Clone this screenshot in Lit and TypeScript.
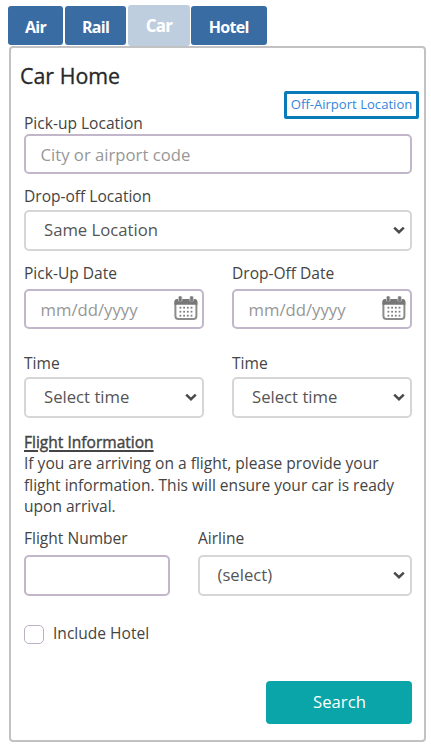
import { LitElement, html, css, svg } from "lit";
import { customElement } from "lit/decorators.js";

const chevron = html`<svg class="chevron" width="12" height="9" viewBox="0 0 12 9">
  <path d="M1.2 1.6 L6 6.2 L10.8 1.6" fill="none" stroke="#4a4a4a" stroke-width="2.5" />
</svg>`;

const dots = [10.8, 14.8, 18.8].flatMap((y) =>
  [5.5, 9.2, 12.9, 16.6].map((x) => svg`<rect x=${x} y=${y} width="1.8" height="1.8" fill="#808080" />`)
);

const calendar = html`<svg class="calendar" width="24" height="25" viewBox="0 0 24 25">
  <rect x="1.4" y="4" width="21" height="19" rx="3" fill="#fff" stroke="#8c8c8c" stroke-width="2" />
  <path d="M.4 8.8 V6 Q.4 3 3.4 3 H20.4 Q23.4 3 23.4 6 V8.8 Z" fill="#777" />
  <rect x="4" y="0" width="4.4" height="5.6" rx="1.5" fill="#ccc" />
  <rect x="15.4" y="0" width="4.4" height="5.6" rx="1.5" fill="#ccc" />
  <rect x="4.9" y=".2" width="2.6" height="5.4" rx="1.2" fill="#777" />
  <rect x="16.3" y=".2" width="2.6" height="5.4" rx="1.2" fill="#777" />
  ${dots}
</svg>`;

@customElement("app-root")
export class AppRoot extends LitElement {
  static styles = css`
    :host {
      display: block;
      box-sizing: border-box;
      height: 750px;
      padding: 5px 5px 8px 8px;
      background: #fff;
      font-family: "Open Sans", sans-serif;
      font-size: 15.55px;
      color: #444;
    }
    *, *::before { box-sizing: border-box; }
    .tabs {
      display: flex;
      align-items: flex-end;
      gap: 2px;
      height: 41px;
      padding-bottom: 1px;
    }
    .tab {
      display: flex;
      align-items: center;
      justify-content: center;
      height: 39px;
      padding-top: 3px;
      border-radius: 3px;
      background: #396ca3;
      color: #fff;
      font-weight: 700;
      font-size: 16px;
      letter-spacing: -0.7px;
    }
    .air { width: 55px; }
    .rail { width: 61px; }
    .car {
      width: 62px;
      height: 41px;
      margin: 0 -1px -1px 0;
      padding: 0;
      background: #bfcede;
      font-size: 17px;
    }
    .hotel { width: 75.5px; }
    .panel {
      width: 417px;
      height: 696px;
      margin-left: 1px;
      padding: 0 12px 0 13px;
      border: 2px solid #c2c2c2;
      border-radius: 4px;
    }
    .title {
      height: 43px;
      margin: 0 0 0 -4px;
      padding-top: 13px;
      font-size: 21.4px;
      font-weight: 400;
      line-height: 30px;
      color: #282828;
      -webkit-text-stroke: 0.3px #282828;
    }
    .link-row { display: flex; justify-content: flex-end; height: 22px; margin-right: -7px; }
    .link {
      width: 135px;
      height: 28px;
      border: 3px solid #0a7ab8;
      border-radius: 2px;
      color: #3485dc;
      font-size: 13.1px;
      line-height: 21px;
      text-align: center;
      white-space: nowrap;
    }
    .label { display: block; height: 21px; line-height: 20px; white-space: nowrap; }
    .field {
      display: flex;
      align-items: center;
      justify-content: space-between;
      height: 40px;
      padding: 0 5px 0 14.5px;
      border: 2px solid #c2b7ca;
      border-radius: 5px;
      color: #979797;
      font-size: 16.7px;
      white-space: nowrap;
    }
    .select {
      height: 41px;
      padding: 0 5px 0 18px;
      border-color: #d6d6d6;
      color: #555;
    }
    .select span { padding-bottom: 2px; }
    .calendar { margin: -1px -1px 0 0; }
    .pickup { margin-bottom: 12px; }
    .dropoff { margin-bottom: 12px; }
    .dropoff .label { height: 24px; }
    .pair { display: grid; grid-template-columns: 180px 180px; column-gap: 28px; }
    .dates { margin-bottom: 24px; }
    .dates .label { height: 26px; }
    .times { margin-bottom: 14px; }
    .times .label { height: 24px; }
    .flight-title { height: 21px; line-height: 21px; }
    .flight-title span {
      text-decoration: underline;
      text-decoration-thickness: 1.5px;
      text-underline-offset: 2px;
      -webkit-text-stroke: 0.4px #444;
    }
    .note { margin: 0 0 10px; line-height: 21.7px; white-space: nowrap; }
    .flight { grid-template-columns: 146px 214px; margin-bottom: 28px; }
    .flight .label { height: 27px; }
    .flight .field { height: 41px; }
    .flight .select { padding-left: 17.5px; }
    .check { display: flex; align-items: center; gap: 9px; height: 20px; margin-bottom: 37px; }
    .check span + span { padding-bottom: 2px; }
    .box { width: 20px; height: 19px; border: 1.5px solid #bcb0c5; border-radius: 5px; }
    .actions { display: flex; justify-content: flex-end; }
    .search {
      width: 146px;
      height: 43px;
      padding: 0 0 3px 1px;
      border: 0;
      border-radius: 4px;
      background: #0aa5a8;
      color: #fff;
      font: 16.7px "Open Sans", sans-serif;
    }
  `;

  private select(label: string, value: string) {
    return html`<div><span class="label">${label}</span>
      <div class="field select"><span>${value}</span>${chevron}</div></div>`;
  }

  private date(label: string) {
    return html`<div><span class="label">${label}</span>
      <div class="field"><span>mm/dd/yyyy</span>${calendar}</div></div>`;
  }

  render() {
    return html`
      <nav class="tabs">
        <div class="tab air">Air</div>
        <div class="tab rail">Rail</div>
        <div class="tab car">Car</div>
        <div class="tab hotel">Hotel</div>
      </nav>
      <main class="panel">
        <h1 class="title">Car Home</h1>
        <div class="link-row"><a class="link">Off-Airport Location</a></div>
        <div class="pickup">
          <span class="label">Pick-up Location</span>
          <div class="field"><span>City or airport code</span></div>
        </div>
        <div class="dropoff">${this.select("Drop-off Location", "Same Location")}</div>
        <div class="pair dates">${this.date("Pick-Up Date")}${this.date("Drop-Off Date")}</div>
        <div class="pair times">
          ${this.select("Time", "Select time")}${this.select("Time", "Select time")}
        </div>
        <div class="flight-title"><span>Flight Information</span></div>
        <p class="note">
          If you are arriving on a flight, please provide your<br />
          flight information. This will ensure your car is ready<br />
          upon arrival.
        </p>
        <div class="pair flight">
          <div><span class="label">Flight Number</span><div class="field"></div></div>
          ${this.select("Airline", "(select)")}
        </div>
        <div class="check"><span class="box"></span><span>Include Hotel</span></div>
        <div class="actions"><button class="search">Search</button></div>
      </main>
    `;
  }
}
